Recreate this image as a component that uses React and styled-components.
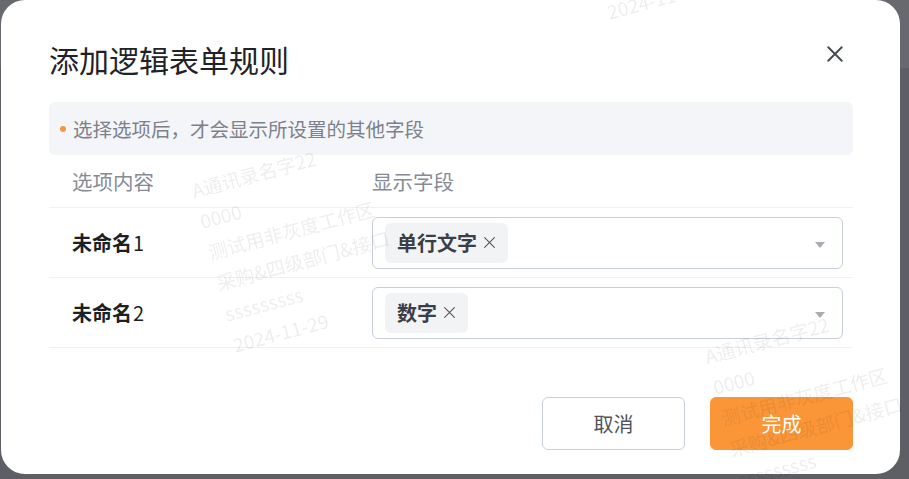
import React from "react";
import styled, { createGlobalStyle } from "styled-components";

const GlobalStyle = createGlobalStyle`
  html, body {
    margin: 0;
    padding: 0;
  }
  body {
    width: 909px;
    height: 479px;
    overflow: hidden;
    background: linear-gradient(#67696e 0, #67696e 68px, #5d5f64 68px);
    font-family: "Noto Sans CJK SC", "Noto Sans", sans-serif;
  }
`;

const watermarkLines = [
  "A通讯录名字22",
  "0000",
  "测试用非灰度工作区",
  "采购&四级部门&接口",
  "sssssssss",
  "2024-11-29",
];

const watermarkSpots = [
  { x: 188, y: 175 },
  { x: 701, y: 341 },
  { x: 562, y: -158 },
];

const rules = [
  { name: "未命名", index: 1, fields: ["单行文字"] },
  { name: "未命名", index: 2, fields: ["数字"] },
];

const Modal = styled.div`
  box-sizing: border-box;
  width: 899px;
  height: 474px;
  margin-left: 1px;
  padding: 0 47px 0 48px;
  background: #ffffff;
  border-radius: 24px;
`;

const Header = styled.div`
  display: flex;
  align-items: flex-start;
  justify-content: space-between;
  padding-top: 38px;
`;

const Title = styled.h2`
  margin: 0;
  font-size: 30px;
  line-height: 42px;
  font-weight: 400;
  color: #1f2329;
`;

const CloseButton = styled.button`
  display: flex;
  align-items: center;
  justify-content: center;
  width: 24px;
  height: 24px;
  margin: 4px 6px 0 0;
  padding: 0;
  border: 0;
  background: transparent;
  color: #474a52;
  cursor: pointer;
`;

const Notice = styled.div`
  display: flex;
  align-items: center;
  gap: 7px;
  height: 53px;
  margin-top: 22px;
  padding: 0 11px;
  background: #f4f5f8;
  border-radius: 6px;
  font-size: 19.5px;
  color: #7d818b;
`;

const Dot = styled.span`
  width: 6px;
  height: 6px;
  border-radius: 50%;
  background: #f7963a;
  flex-shrink: 0;
`;

const Row = styled.div`
  display: grid;
  grid-template-columns: 323px 471px;
  align-items: center;
  height: ${(p) => (p.head ? "52px" : "69px")};
  border-bottom: 1px solid #eff1f4;
`;

const HeadCell = styled.div`
  padding-left: ${(p) => (p.first ? "23px" : "0")};
  font-size: 20.5px;
  color: #878b95;
`;

const Label = styled.div`
  padding-left: 23px;
  font-size: 20px;
  font-weight: 700;
  color: #1d1f24;
`;

const LabelIndex = styled.span`
  font-weight: 400;
  margin-left: 1px;
`;

const Select = styled.div`
  box-sizing: border-box;
  display: flex;
  align-items: center;
  height: 52px;
  padding: 0 17px 0 12px;
  border: 1px solid #c8cfdb;
  border-radius: 6px;
`;

const Tags = styled.div`
  display: flex;
  gap: 6px;
  flex: 1;
`;

const Tag = styled.span`
  display: inline-flex;
  align-items: center;
  gap: 6px;
  height: 40px;
  padding: 0 12px;
  background: #f2f3f5;
  border-radius: 6px;
  font-size: 20px;
  font-weight: 700;
  color: #3b3e45;
`;

const TagClose = styled.span`
  display: flex;
  color: #4e5058;
`;

const Caret = styled.span`
  width: 0;
  height: 0;
  border-left: 5px solid transparent;
  border-right: 5px solid transparent;
  border-top: 6px solid #a9acb3;
  margin-top: 4px;
`;

const Footer = styled.div`
  display: flex;
  justify-content: flex-end;
  gap: 25px;
  margin-top: 49px;
`;

const Button = styled.button`
  box-sizing: border-box;
  width: 143px;
  height: 53px;
  border-radius: 6px;
  font-family: inherit;
  font-size: 20px;
  cursor: pointer;
  border: 1px solid ${(p) => (p.primary ? "#fa9638" : "#c8cfdb")};
  background: ${(p) => (p.primary ? "#fa9638" : "#ffffff")};
  color: ${(p) => (p.primary ? "#ffffff" : "#50535b")};
`;

const WatermarkLayer = styled.div`
  position: fixed;
  inset: 0;
  overflow: hidden;
  pointer-events: none;
`;

const WatermarkBlock = styled.div`
  position: absolute;
  transform: rotate(-15deg);
  transform-origin: top left;
  white-space: nowrap;
  font-size: 19px;
  line-height: 32px;
  color: rgba(0, 0, 0, 0.07);
`;

const CrossIcon = ({ size, width }) => (
  <svg width={size} height={size} viewBox="0 0 16 16" fill="none">
    <path
      d="M2 2L14 14M14 2L2 14"
      stroke="currentColor"
      strokeWidth={width}
      strokeLinecap="round"
    />
  </svg>
);

const App = () => {
  return (
    <>
      <GlobalStyle />
      <Modal>
        <Header>
          <Title>添加逻辑表单规则</Title>
          <CloseButton aria-label="关闭">
            <CrossIcon size={18} width={1.7} />
          </CloseButton>
        </Header>
        <Notice>
          <Dot />
          选择选项后，才会显示所设置的其他字段
        </Notice>
        <Row head>
          <HeadCell first>选项内容</HeadCell>
          <HeadCell>显示字段</HeadCell>
        </Row>
        {rules.map((rule) => (
          <Row key={rule.index}>
            <Label>
              {rule.name}
              <LabelIndex>{rule.index}</LabelIndex>
            </Label>
            <Select>
              <Tags>
                {rule.fields.map((f) => (
                  <Tag key={f}>
                    {f}
                    <TagClose>
                      <CrossIcon size={13} width={1.3} />
                    </TagClose>
                  </Tag>
                ))}
              </Tags>
              <Caret />
            </Select>
          </Row>
        ))}
        <Footer>
          <Button>取消</Button>
          <Button primary>完成</Button>
        </Footer>
      </Modal>
      <WatermarkLayer>
        {watermarkSpots.map((s, i) => (
          <WatermarkBlock key={i} style={{ left: s.x, top: s.y }}>
            {watermarkLines.map((l) => (
              <div key={l}>{l}</div>
            ))}
          </WatermarkBlock>
        ))}
      </WatermarkLayer>
    </>
  );
};

export default App;
